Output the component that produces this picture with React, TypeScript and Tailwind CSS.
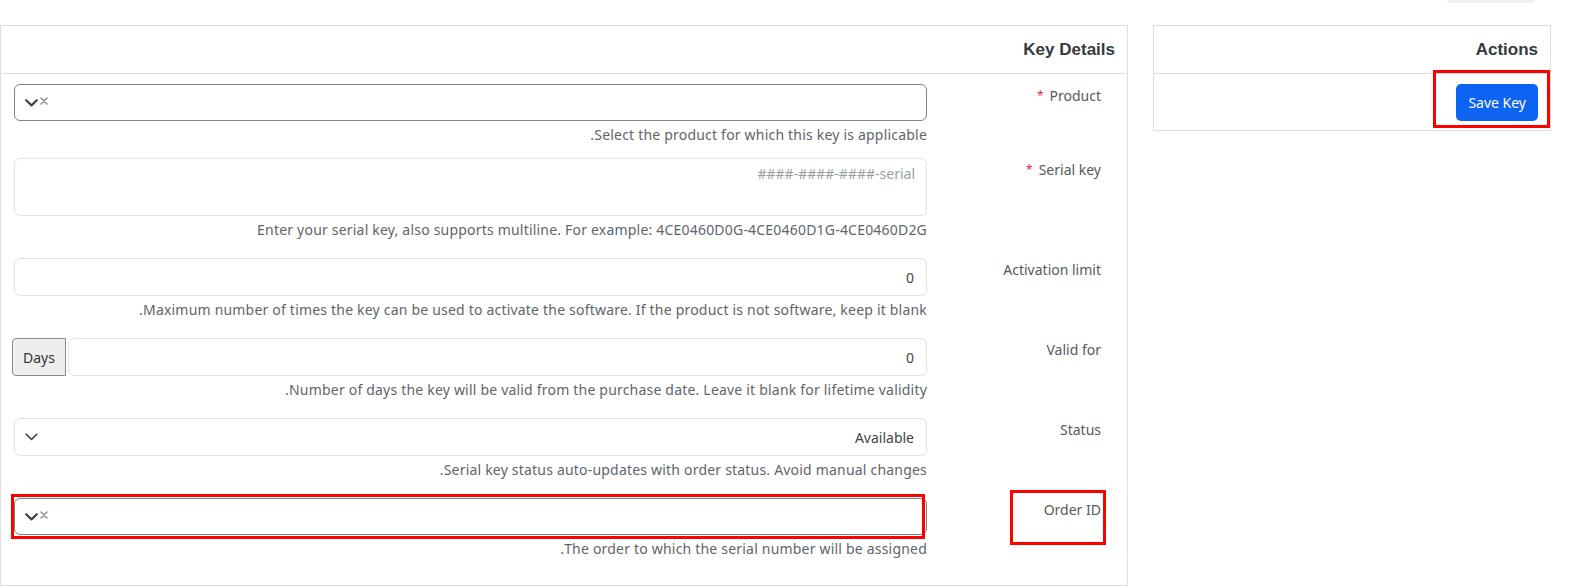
import React from "react";

const labelFont = "font-['Noto_Sans',sans-serif]";
const helperCls = "text-[14px] tracking-[0.2px] leading-5 text-[#5f646a] mt-1";

function Chevron({ thin = false }: { thin?: boolean }) {
  return (
    <svg width="13" height="8" viewBox="0 0 13 8" className="shrink-0">
      <path
        d="M1.2 1.2 L6.5 6.4 L11.8 1.2"
        fill="none"
        stroke="#444"
        strokeWidth={thin ? 1.6 : 2.2}
        strokeLinecap="round"
        strokeLinejoin="round"
      />
    </svg>
  );
}

function Clear() {
  return (
    <svg width="8" height="8" viewBox="0 0 8 8" className="shrink-0 mb-[3px]">
      <path d="M1 1 L7 7 M7 1 L1 7" stroke="#8a9096" strokeWidth="1.5" strokeLinecap="round" />
    </svg>
  );
}

function Label({ text, required, boxed }: { text: string; required?: boolean; boxed?: boolean }) {
  return (
    <div className="relative w-[200px] shrink-0 pr-[26px] pt-[2px] text-[14px] leading-5 text-[#555a60]">
      <span>
        {text}
        {required && <span className="text-[#e8283c] text-[12px] align-top mr-[6px]">*</span>}
      </span>
      {boxed && (
        <div className="pointer-events-none absolute right-[21px] top-[-8px] w-[96px] h-[55px] border-[3px] border-[#ff0000]" />
      )}
    </div>
  );
}

function Row({ children, mb = "mb-[18px]" }: { children: React.ReactNode; mb?: string }) {
  return <div className={`flex ${mb}`}>{children}</div>;
}

function VSelect({ boxed }: { boxed?: boolean }) {
  return (
    <div className="relative">
      <div className="h-[37px] rounded-[6px] border border-[#7b838c] bg-white flex items-center pl-[10px]" dir="ltr">
        <div className="flex items-center gap-[2px]">
          <Chevron />
          <Clear />
        </div>
      </div>
      {boxed && (
        <div className="pointer-events-none absolute left-[-3px] right-[2px] top-[-4px] bottom-[-4px] border-[3px] border-[#ff0000]" />
      )}
    </div>
  );
}

export default function App() {
  return (
    <div dir="rtl" className={`w-[1575px] h-[588px] bg-white overflow-hidden ${labelFont}`}>
      {/* cut-off element above */}
      <div className="h-[25px] flex justify-start pr-[40px]">
        <div className="h-[3px] w-[88px] bg-[#f0f0f0] rounded-b-[3px]" />
      </div>

      <div className="flex items-start gap-[25px] pr-[24px]">
        {/* Actions */}
        <div className="flex-1 border border-[#dedede] bg-white">
          <div className="h-[48px] border-b border-[#dedede] flex items-center pr-[12px]">
            <h2 className="font-['Liberation_Sans',Arial,sans-serif] font-bold text-[17px] text-[#343a40]">Actions</h2>
          </div>
          <div className="pt-[10px] pb-[9px] pr-[12px] flex">
            <div className="relative">
              <button className="h-[37px] px-[12px] rounded-[5px] bg-[#0d63f2] text-white text-[14px] leading-5">
                Save Key
              </button>
              <div className="pointer-events-none absolute left-[-23px] right-[-12px] top-[-14px] bottom-[-7px] border-[3px] border-[#ff0000]" />
            </div>
          </div>
        </div>

        {/* Key Details */}
        <div className="w-[1128px] shrink-0 border border-[#dedede] bg-white">
          <div className="h-[48px] border-b border-[#dedede] flex items-center pr-[12px]">
            <h2 className="font-['Liberation_Sans',Arial,sans-serif] font-bold text-[17px] text-[#343a40]">Key Details</h2>
          </div>

          <div className="pt-[10px] pl-[13px] pb-[26px]">
            <Row mb="mb-[13px]">
              <Label text="Product" required />
              <div className="flex-1">
                <VSelect />
                <p className={helperCls}>Select the product for which this key is applicable.</p>
              </div>
            </Row>

            <Row>
              <Label text="Serial key" required />
              <div className="flex-1">
                <textarea
                  readOnly
                  dir="ltr"
                  placeholder="####-####-####-serial"
                  className="block w-full h-[58px] resize-none rounded-[6px] border border-[#dee2e6] px-[11px] pt-[5px] text-right text-[14px] leading-5 text-[#444] placeholder:text-[#9a9ea3] outline-none"
                />
                <p className={helperCls}>
                  Enter your serial key, also supports multiline. For example: 4CE0460D0G-4CE0460D1G-4CE0460D2G
                </p>
              </div>
            </Row>

            <Row>
              <Label text="Activation limit" />
              <div className="flex-1">
                <input
                  readOnly
                  value="0"
                  className="block w-full h-[38px] rounded-[6px] border border-[#dee2e6] px-[12px] text-[14px] text-[#444] outline-none"
                />
                <p className={helperCls}>
                  Maximum number of times the key can be used to activate the software. If the product is not software, keep it blank.
                </p>
              </div>
            </Row>

            <Row>
              <Label text="Valid for" />
              <div className="flex-1">
                <div className="flex gap-[2px] ml-[-2px]">
                  <input
                    readOnly
                    value="0"
                    className="flex-1 min-w-0 h-[38px] rounded-[6px] border border-[#dee2e6] px-[12px] text-[14px] text-[#444] outline-none"
                  />
                  <span className="h-[38px] w-[54px] flex items-center justify-center rounded-l-[4px] border border-[#8a8a8a] bg-[#eeeeee] text-[14px] text-[#333]">
                    Days
                  </span>
                </div>
                <p className={helperCls}>
                  Number of days the key will be valid from the purchase date. Leave it blank for lifetime validity.
                </p>
              </div>
            </Row>

            <Row>
              <Label text="Status" />
              <div className="flex-1">
                <div className="h-[38px] rounded-[6px] border border-[#dee2e6] flex items-center justify-between pr-[12px] pl-[10px] text-[14px] text-[#444]">
                  <span>Available</span>
                  <Chevron thin />
                </div>
                <p className={helperCls}>Serial key status auto-updates with order status. Avoid manual changes.</p>
              </div>
            </Row>

            <Row mb="mb-0">
              <Label text="Order ID" boxed />
              <div className="flex-1">
                <VSelect boxed />
                <p className={helperCls}>The order to which the serial number will be assigned.</p>
              </div>
            </Row>
          </div>
        </div>
      </div>
    </div>
  );
}
